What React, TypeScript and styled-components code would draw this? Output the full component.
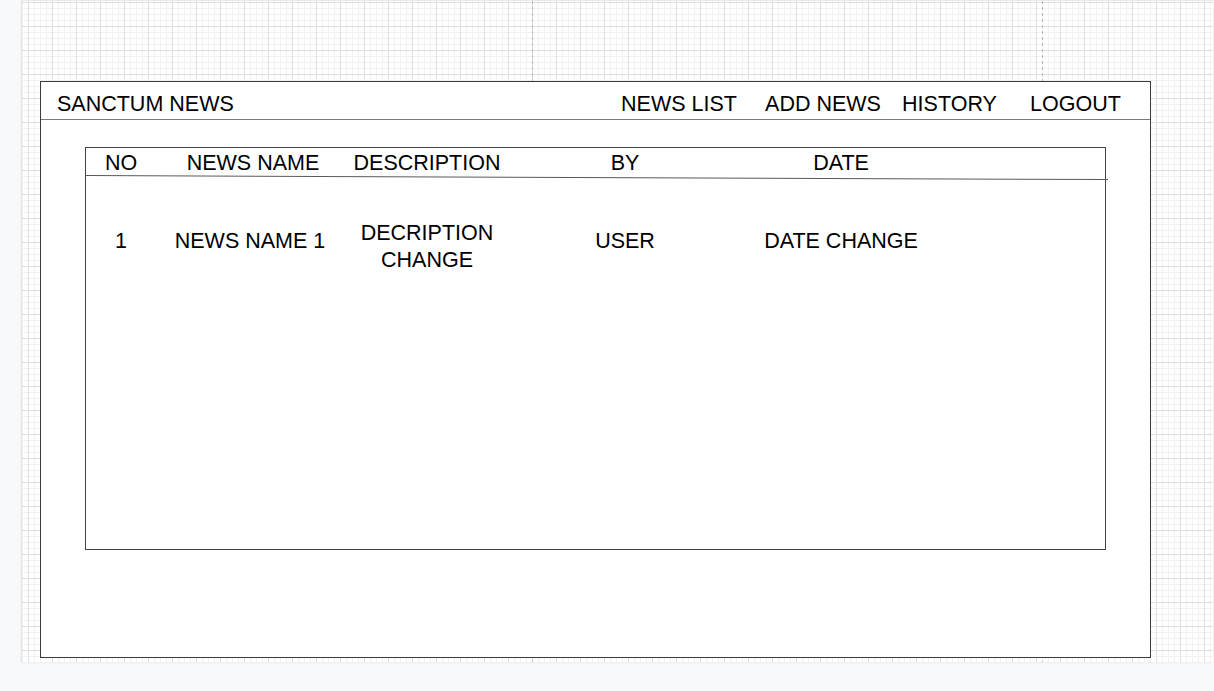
import React from "react";
import styled, { createGlobalStyle } from "styled-components";

const GlobalStyle = createGlobalStyle`
  html, body {
    margin: 0;
    padding: 0;
    background: #f8f9fa;
    font-family: "Liberation Sans", Arial, sans-serif;
  }
  #root {
    width: 1214px;
    height: 691px;
    overflow: hidden;
  }
`;

const Canvas = styled.div`
  margin-left: 21px;
  width: 1192px;
  height: 662px;
  padding: 80px 0 0 18px;
  box-sizing: border-box;
  border-left: 1px solid #e4e4e4;
  border-top: 1px solid #e9e9e9;
  box-shadow: 0 1px 2px rgba(0, 0, 0, 0.06);
  background-color: #ffffff;
  background-image:
    linear-gradient(to bottom, #b8b8b8 3px, transparent 3px),
    linear-gradient(to bottom, #b8b8b8 3px, transparent 3px),
    linear-gradient(to right, #dedede 1px, transparent 1px),
    linear-gradient(to bottom, #dedede 1px, transparent 1px),
    linear-gradient(to right, #f1f1f1 1px, transparent 1px),
    linear-gradient(to bottom, #f1f1f1 1px, transparent 1px);
  background-size: 1px 6px, 1px 6px, 24px 100%, 100% 24px, 6px 100%, 100% 6px;
  background-position: 510px 0, 1020px 0, 6px 0, 0 1px, 0 0, 0 1px;
  background-repeat: repeat-y, repeat-y, repeat, repeat, repeat, repeat;
`;

const Frame = styled.div`
  box-sizing: border-box;
  width: 1111px;
  height: 577px;
  border: 1px solid #3a3a3a;
  background: #ffffff;
  color: #000;
  font-size: 21.5px;
  line-height: 24px;
`;

const Header = styled.header`
  box-sizing: content-box;
  height: 27px;
  padding: 10px 14.5px 0 16px;
  display: flex;
  align-items: flex-start;
  border-bottom: 1px solid #7a7a7a;
`;

const Brand = styled.div`
  white-space: nowrap;
`;

const Nav = styled.nav`
  margin-left: auto;
  display: flex;
`;

const NavItem = styled.div<{ $ml: number }>`
  width: 120px;
  margin-left: ${(p) => p.$ml}px;
  text-align: center;
  white-space: nowrap;
  cursor: pointer;
`;

const Table = styled.div`
  box-sizing: border-box;
  width: 1021px;
  height: 403px;
  margin: 27px 0 0 44px;
  border: 1px solid #444;
`;

const Row = styled.div`
  display: grid;
  grid-template-columns: 70px 194px 154px 242px 190px 1fr;
  align-items: start;
`;

const HeadRow = styled(Row)`
  height: 27px;
  box-sizing: border-box;
  padding-top: 3px;
`;

const Separator = styled.div`
  width: 1022px;
  height: 1px;
  background: #5a5a5a;
  transform-origin: 0 50%;
  transform: rotate(0.224deg);
`;

const DataRow = styled(Row)`
  padding-top: 52px;
  line-height: 26.5px;
`;

const Cell = styled.div<{ $shift?: number; $lift?: number }>`
  text-align: center;
  white-space: nowrap;
  padding-right: ${(p) => (p.$shift ?? 0) * 2}px;
  margin-top: ${(p) => -(p.$lift ?? 0)}px;
`;

const columns = ["NO", "NEWS NAME", "DESCRIPTION", "BY", "DATE"];

export default function App() {
  return (
    <>
      <GlobalStyle />
      <Canvas>
        <Frame>
          <Header>
            <Brand>SANCTUM NEWS</Brand>
            <Nav>
              <NavItem $ml={0}>NEWS LIST</NavItem>
              <NavItem $ml={24}>ADD NEWS</NavItem>
              <NavItem $ml={6.5}>HISTORY</NavItem>
              <NavItem $ml={6}>LOGOUT</NavItem>
            </Nav>
          </Header>
          <Table>
            <HeadRow>
              {columns.map((c) => (
                <Cell key={c}>{c}</Cell>
              ))}
            </HeadRow>
            <Separator />
            <DataRow>
              <Cell>1</Cell>
              <Cell $shift={3}>NEWS NAME 1</Cell>
              <Cell $lift={8}>
                DECRIPTION
                <br />
                CHANGE
              </Cell>
              <Cell>USER</Cell>
              <Cell>DATE CHANGE</Cell>
            </DataRow>
          </Table>
        </Frame>
      </Canvas>
    </>
  );
}
